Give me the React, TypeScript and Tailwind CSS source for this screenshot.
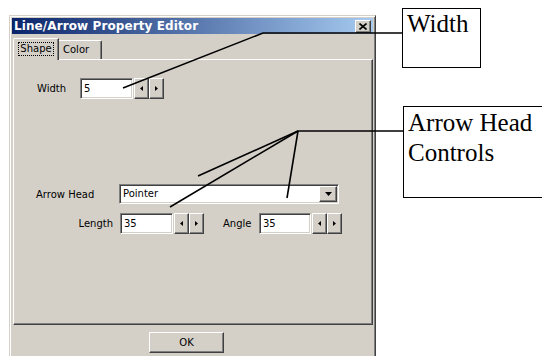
import React from "react";

const raised =
  "bg-[#d4d0c8] border border-t-white border-l-white border-b-[#404040] border-r-[#404040] shadow-[inset_-1px_-1px_0_#808080]";
const sunken =
  "bg-white border border-t-[#808080] border-l-[#808080] border-b-white border-r-white shadow-[inset_1px_1px_0_#404040,inset_-1px_-1px_0_#d4d0c8]";

function Tri({ dir }: { dir: "left" | "right" | "down" }) {
  if (dir === "down")
    return (
      <svg width="7" height="4" viewBox="0 0 7 4">
        <polygon points="0,0 7,0 3.5,4" fill="#000" />
      </svg>
    );
  return (
    <svg width="3" height="5" viewBox="0 0 3 5">
      {dir === "left" ? (
        <polygon points="3,0 3,5 0,2.5" fill="#000" />
      ) : (
        <polygon points="0,0 0,5 3,2.5" fill="#000" />
      )}
    </svg>
  );
}

function Spin({ value, w }: { value: string; w: string }) {
  return (
    <div className="flex items-center">
      <div className={`${sunken} ${w} h-[21px] flex items-center pl-[3px] text-[10px] leading-none`}>
        {value}
      </div>
      <div className={`${raised} w-[15px] h-[21px] flex items-center justify-center ml-[1px]`}>
        <Tri dir="left" />
      </div>
      <div className={`${raised} w-[15px] h-[21px] flex items-center justify-center`}>
        <Tri dir="right" />
      </div>
    </div>
  );
}

export default function App() {
  return (
    <div
      className="relative w-[542px] h-[356px] overflow-hidden bg-white text-black"
      style={{ fontFamily: '"DejaVu Sans", Tahoma, sans-serif' }}
    >
      <div className="pt-[15px] pl-[9px]">
        <div className="w-[367px] h-[360px] bg-[#d4d0c8] border border-t-[#d4d0c8] border-l-[#d4d0c8] border-b-[#404040] border-r-[#404040] shadow-[inset_1px_1px_0_#fff,inset_-1px_-1px_0_#808080] p-[2px] flex flex-col">
          {/* title bar */}
          <div className="h-[16px] flex items-center justify-between bg-[linear-gradient(to_right,#0a246a,#a6caf0)] pl-[2px] pr-[2px]">
            <span className="text-white font-bold text-[12px] leading-none tracking-[0.1px]">
              Line/Arrow Property Editor
            </span>
            <div className={`${raised} w-[16px] h-[13px] flex items-center justify-center text-[11px] font-bold leading-none`}>
              <svg width="8" height="7" viewBox="0 0 8 7">
                <path d="M0.5 0.5 L7.5 6.5 M7.5 0.5 L0.5 6.5" stroke="#000" strokeWidth="1.6" />
              </svg>
            </div>
          </div>

          {/* tabs */}
          <div className="mt-[4px] ml-[1px] flex items-end h-[22px] relative z-10">
            <div className="h-[22px] w-[46px] bg-[#d4d0c8] border-t border-l border-t-white border-l-white border-r border-r-[#404040] shadow-[inset_-1px_0_0_#808080] rounded-tl-[2px] flex items-start justify-center pt-[3px]">
              <span className="border border-dotted border-black px-[1px] text-[10px] leading-[12px]">Shape</span>
            </div>
            <div className="h-[19px] w-[43px] mb-[1px] bg-[#d4d0c8] border-t border-t-white border-r border-r-[#404040] shadow-[inset_-1px_0_0_#808080] rounded-tr-[2px] flex items-start pl-[4px] pt-[3px] text-[10px] leading-[12px]">
              Color
            </div>
          </div>

          {/* panel */}
          <div className="-mt-[1px] ml-[1px] w-[360px] h-[266px] border border-t-white border-l-white border-b-[#404040] border-r-[#404040] shadow-[inset_-1px_-1px_0_#808080] pt-[18px] pl-[23px] text-[10px] flex flex-col">
            <div className="flex items-center h-[21px]">
              <div className="w-[43px]">Width</div>
              <Spin value="5" w="w-[53px]" />
            </div>

            <div className="flex items-center h-[20px] mt-[85px]">
              <div className="w-[83px] -ml-[1px] pl-0">Arrow Head</div>
              <div className={`${sunken} w-[220px] h-[20px] flex items-center justify-between pl-[3px] pr-[1px]`}>
                <span className="leading-none">Pointer</span>
                <div className={`${raised} w-[18px] h-[16px] flex items-center justify-center`}>
                  <Tri dir="down" />
                </div>
              </div>
            </div>

            <div className="flex items-center h-[21px] mt-[9px]">
              <div className="w-[83px] text-right pr-[7px]">Length</div>
              <Spin value="35" w="w-[53px]" />
              <div className="ml-[19px] w-[36px]">Angle</div>
              <Spin value="35" w="w-[52px]" />
            </div>
          </div>

          {/* OK */}
          <div className="mt-[7px] ml-[137px]">
            <div className={`${raised} w-[75px] h-[21px] flex items-center justify-center text-[10px]`}>OK</div>
          </div>
        </div>
      </div>

      {/* callouts */}
      <svg className="absolute inset-0 pointer-events-none" width="542" height="356">
        <polyline points="123,88 263,33 403,33" fill="none" stroke="#000" strokeWidth="1.6" />
        <line x1="298" y1="131" x2="404" y2="131" stroke="#000" strokeWidth="1.6" />
        <line x1="298" y1="131" x2="198" y2="176" stroke="#000" strokeWidth="1.6" />
        <line x1="298" y1="131" x2="170" y2="207" stroke="#000" strokeWidth="1.6" />
        <line x1="298" y1="131" x2="287" y2="198" stroke="#000" strokeWidth="1.6" />
      </svg>
      <div
        className="absolute left-[402px] top-[8px] w-[79px] h-[60px] border-[1.5px] border-black bg-white pl-[4px] text-[25px] leading-[29px]"
        style={{ fontFamily: '"Liberation Serif", "Times New Roman", serif' }}
      >
        Width
      </div>
      <div
        className="absolute left-[403px] top-[106px] w-[145px] h-[92px] border-[1.5px] border-black bg-white pl-[4px] pt-[1px] text-[25px] leading-[30px]"
        style={{ fontFamily: '"Liberation Serif", "Times New Roman", serif' }}
      >
        Arrow Head
        <br />
        Controls
      </div>
    </div>
  );
}
